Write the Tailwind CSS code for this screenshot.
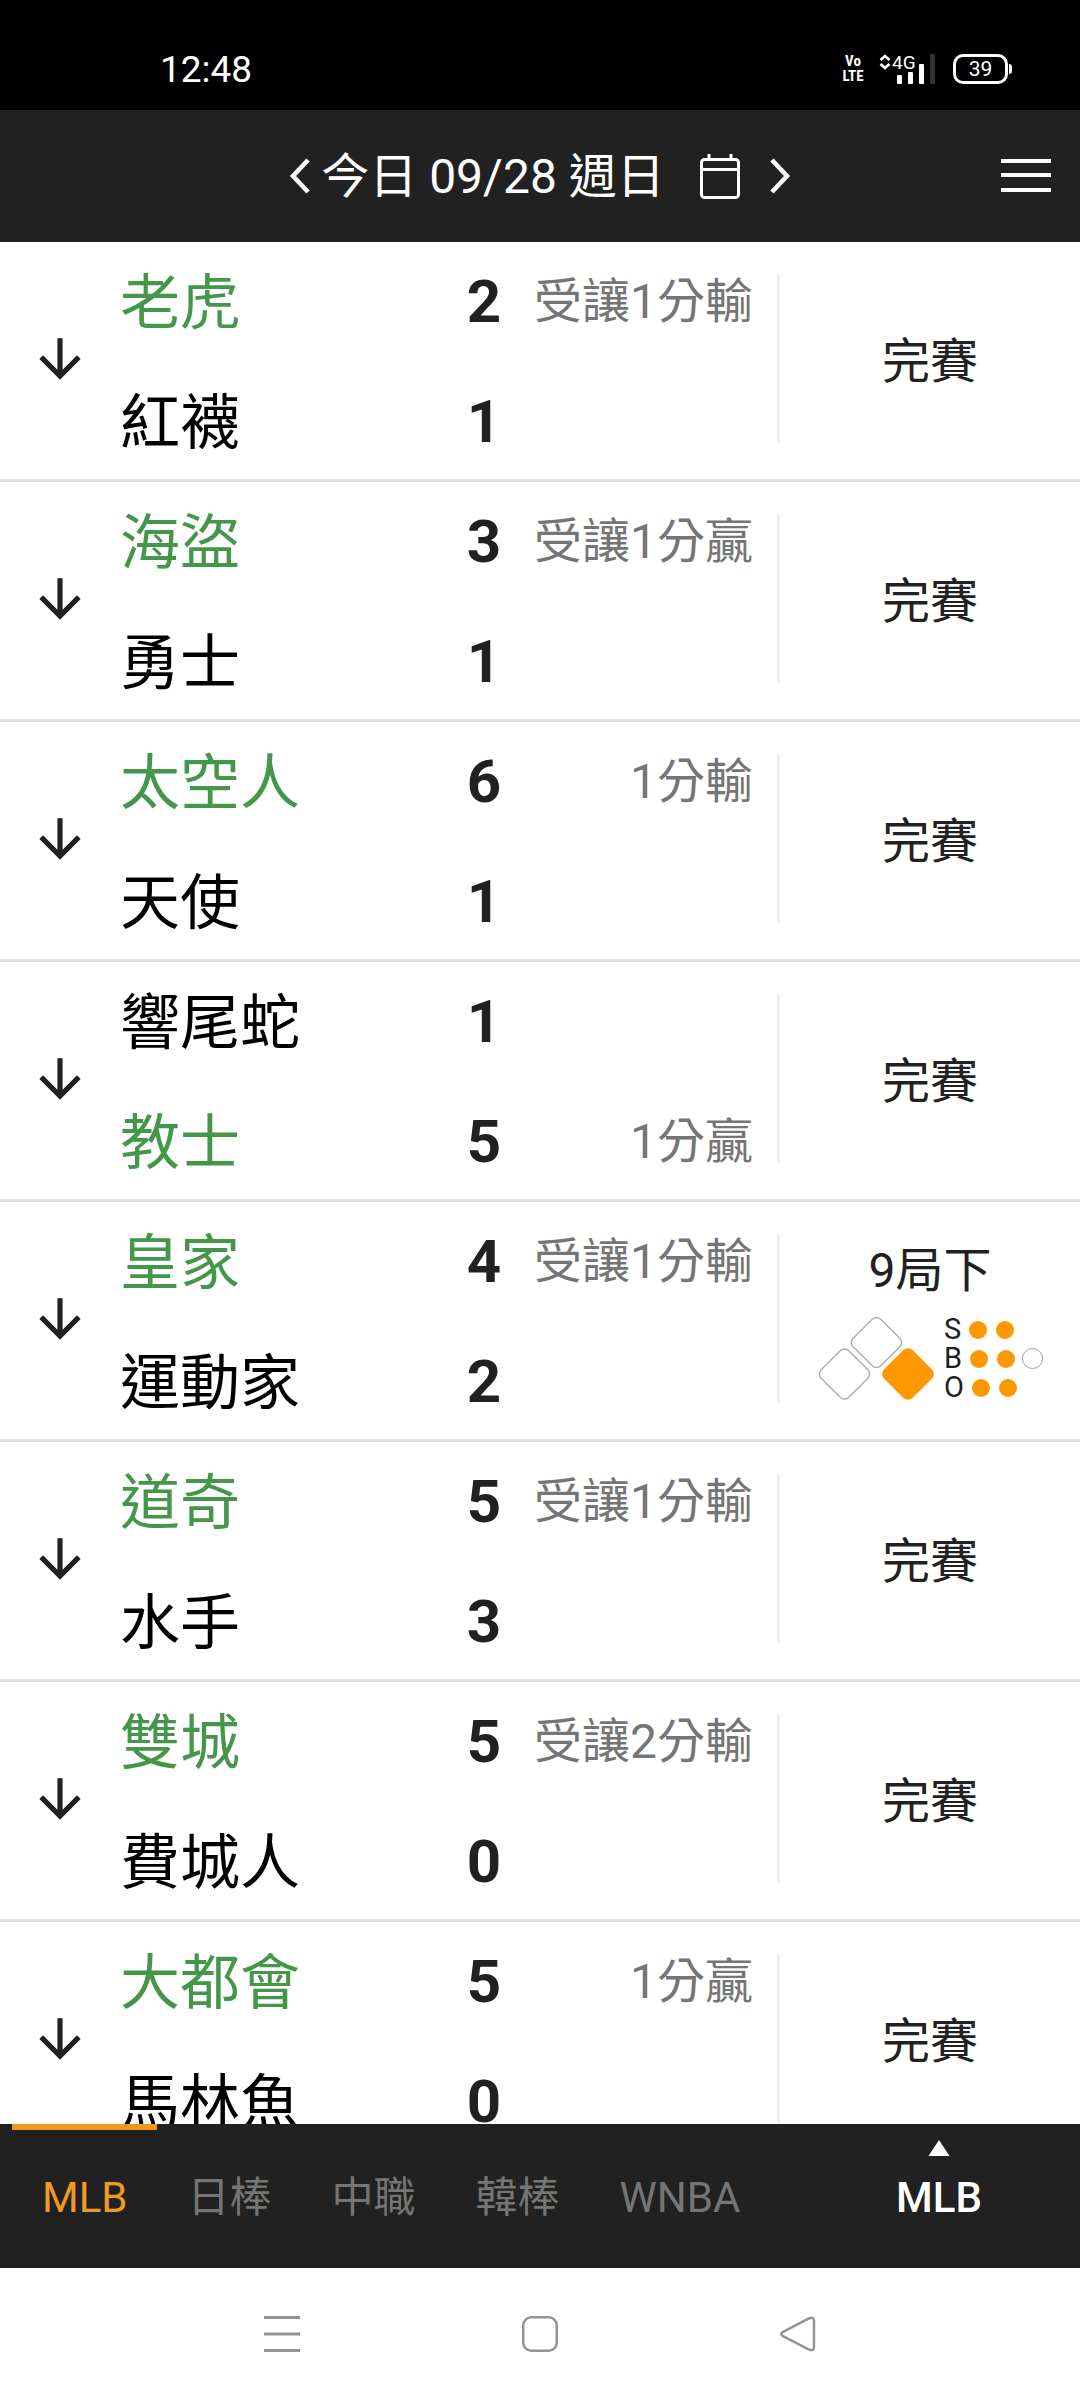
<!DOCTYPE html>
<html lang="zh-Hant">
<head>
<meta charset="utf-8">
<meta name="viewport" content="width=device-width, initial-scale=1">
<title>今日賽事</title>
<script src="https://cdn.jsdelivr.net/npm/@tailwindcss/browser@4"></script>
</head>
<body class="flex h-screen flex-col overflow-hidden bg-white font-[Roboto,'Noto_Sans_CJK_TC',sans-serif] text-[#212121]">

<svg class="hidden" aria-hidden="true">
  <symbol id="down" viewBox="0 0 24 24"><path fill="currentColor" d="M20 12l-1.41-1.41L13 16.17V4h-2v12.17l-5.58-5.59L4 12l8 8 8-8z"/></symbol>
</svg>

<!-- Status bar -->
<div class="flex h-[110px] shrink-0 items-center justify-between bg-black pt-7 pr-[68px] pl-40 text-white">
  <span class="pt-[2px] text-[37px] leading-[40px]">12:48</span>
  <div class="flex items-center">
    <div class="flex w-[26px] flex-col text-center font-['Liberation_Sans_Narrow','Roboto_Condensed',Roboto,sans-serif] text-[15px] leading-[15px] font-bold"><span>Vo</span><span>LTE</span></div>
    <svg class="ml-[13px] h-[30px] w-[58px] overflow-visible" viewBox="0 0 58 30" aria-label="4G">
      <path d="M1.500 6L6 2l4.500 4M1.500 10L6 14l4.500-4" fill="none" stroke="#fff" stroke-width="2.600"/>
      <text x="13" y="15" fill="#fff" font-size="19">4G</text>
      <rect x="18" y="21" width="5" height="9" rx="1" fill="#fff"/>
      <rect x="29" y="18" width="5" height="12" rx="1" fill="#fff"/>
      <rect x="40" y="10" width="5" height="20" rx="1" fill="#fff"/>
      <rect x="51" y="0" width="5" height="30" rx="1" fill="#333"/>
    </svg>
    <div class="ml-4 flex items-center gap-px">
      <div class="flex h-[30px] w-[55px] items-center justify-center rounded-[10px] border-[3px] border-white text-[21px] leading-[24px]">39</div>
      <div class="h-[10px] w-[3px] rounded-r-sm bg-white"></div>
    </div>
  </div>
</div>

<!-- Date header -->
<header class="relative flex h-[132px] shrink-0 items-center justify-center bg-[#212121] text-white">
  <button type="button" aria-label="前一天"><svg class="h-[36px] w-[22px]" viewBox="0 0 22 36"><path d="M19 2L4 18l15 16" fill="none" stroke="currentColor" stroke-width="4.500"/></svg></button>
  <h1 class="ml-2.5 pt-[2px] text-[48px] leading-[56px] font-normal">今日 09/28 週日</h1>
  <button type="button" class="ml-[34px]" aria-label="選擇日期"><svg class="h-[46px] w-[42px]" viewBox="0 0 42 46"><rect x="2.500" y="6.500" width="37" height="38" rx="3" fill="none" stroke="currentColor" stroke-width="3"/><path d="M3 16.500h36M10 1v6M32 1v6" fill="none" stroke="currentColor" stroke-width="3"/></svg></button>
  <button type="button" class="ml-7" aria-label="後一天"><svg class="h-[36px] w-[22px]" viewBox="0 0 22 36"><path d="M3 2l15 16L3 34" fill="none" stroke="currentColor" stroke-width="4.500"/></svg></button>
  <button type="button" class="absolute right-[29px]" aria-label="選單"><svg class="h-[34px] w-[50px]" viewBox="0 0 50 34"><path d="M0 2h50M0 16h50M0 31h50" stroke="currentColor" stroke-width="4"/></svg></button>
</header>

<!-- Games -->
<main class="min-h-0 flex-1 overflow-hidden">
<ul>
  <li class="flex h-[240px] border-b-[3px] border-[#e0e0e0]">
    <button type="button" class="flex w-[120px] items-center justify-center pb-[3px]" aria-label="展開"><svg class="size-[62px]"><use href="#down"/></svg></button>
    <div class="flex flex-1 flex-col gap-[3px] pr-6">
      <div class="flex h-[117px] items-center pt-[2px]"><span class="flex-1 pt-1 text-[60px] leading-[72px] text-[#43964a]">老虎</span><span class="w-[60px] text-center text-[60px] leading-[72px] font-bold">2</span><span class="w-[239px] text-right text-[48px] leading-[56px] text-[#757575]">受讓1分輸</span></div>
      <div class="flex h-[117px] items-center pt-[2px]"><span class="flex-1 pt-1 text-[60px] leading-[72px] text-black">紅襪</span><span class="w-[60px] text-center text-[60px] leading-[72px] font-bold">1</span><span class="w-[239px]"></span></div>
    </div>
    <div class="mt-8 mb-[37px] w-[3px] bg-[#eeeeee]"></div>
    <div class="flex w-[300px] items-center justify-center pt-[2px] text-[48px] leading-[56px]">完賽</div>
  </li>
  <li class="flex h-[240px] border-b-[3px] border-[#e0e0e0]">
    <button type="button" class="flex w-[120px] items-center justify-center pb-[3px]" aria-label="展開"><svg class="size-[62px]"><use href="#down"/></svg></button>
    <div class="flex flex-1 flex-col gap-[3px] pr-6">
      <div class="flex h-[117px] items-center pt-[2px]"><span class="flex-1 pt-1 text-[60px] leading-[72px] text-[#43964a]">海盜</span><span class="w-[60px] text-center text-[60px] leading-[72px] font-bold">3</span><span class="w-[239px] text-right text-[48px] leading-[56px] text-[#757575]">受讓1分贏</span></div>
      <div class="flex h-[117px] items-center pt-[2px]"><span class="flex-1 pt-1 text-[60px] leading-[72px] text-black">勇士</span><span class="w-[60px] text-center text-[60px] leading-[72px] font-bold">1</span><span class="w-[239px]"></span></div>
    </div>
    <div class="mt-8 mb-[37px] w-[3px] bg-[#eeeeee]"></div>
    <div class="flex w-[300px] items-center justify-center pt-[2px] text-[48px] leading-[56px]">完賽</div>
  </li>
  <li class="flex h-[240px] border-b-[3px] border-[#e0e0e0]">
    <button type="button" class="flex w-[120px] items-center justify-center pb-[3px]" aria-label="展開"><svg class="size-[62px]"><use href="#down"/></svg></button>
    <div class="flex flex-1 flex-col gap-[3px] pr-6">
      <div class="flex h-[117px] items-center pt-[2px]"><span class="flex-1 pt-1 text-[60px] leading-[72px] text-[#43964a]">太空人</span><span class="w-[60px] text-center text-[60px] leading-[72px] font-bold">6</span><span class="w-[239px] text-right text-[48px] leading-[56px] text-[#757575]">1分輸</span></div>
      <div class="flex h-[117px] items-center pt-[2px]"><span class="flex-1 pt-1 text-[60px] leading-[72px] text-black">天使</span><span class="w-[60px] text-center text-[60px] leading-[72px] font-bold">1</span><span class="w-[239px]"></span></div>
    </div>
    <div class="mt-8 mb-[37px] w-[3px] bg-[#eeeeee]"></div>
    <div class="flex w-[300px] items-center justify-center pt-[2px] text-[48px] leading-[56px]">完賽</div>
  </li>
  <li class="flex h-[240px] border-b-[3px] border-[#e0e0e0]">
    <button type="button" class="flex w-[120px] items-center justify-center pb-[3px]" aria-label="展開"><svg class="size-[62px]"><use href="#down"/></svg></button>
    <div class="flex flex-1 flex-col gap-[3px] pr-6">
      <div class="flex h-[117px] items-center pt-[2px]"><span class="flex-1 pt-1 text-[60px] leading-[72px] text-black">響尾蛇</span><span class="w-[60px] text-center text-[60px] leading-[72px] font-bold">1</span><span class="w-[239px]"></span></div>
      <div class="flex h-[117px] items-center pt-[2px]"><span class="flex-1 pt-1 text-[60px] leading-[72px] text-[#43964a]">教士</span><span class="w-[60px] text-center text-[60px] leading-[72px] font-bold">5</span><span class="w-[239px] text-right text-[48px] leading-[56px] text-[#757575]">1分贏</span></div>
    </div>
    <div class="mt-8 mb-[37px] w-[3px] bg-[#eeeeee]"></div>
    <div class="flex w-[300px] items-center justify-center pt-[2px] text-[48px] leading-[56px]">完賽</div>
  </li>
  <li class="flex h-[240px] border-b-[3px] border-[#e0e0e0]">
    <button type="button" class="flex w-[120px] items-center justify-center pb-[3px]" aria-label="展開"><svg class="size-[62px]"><use href="#down"/></svg></button>
    <div class="flex flex-1 flex-col gap-[3px] pr-6">
      <div class="flex h-[117px] items-center pt-[2px]"><span class="flex-1 pt-1 text-[60px] leading-[72px] text-[#43964a]">皇家</span><span class="w-[60px] text-center text-[60px] leading-[72px] font-bold">4</span><span class="w-[239px] text-right text-[48px] leading-[56px] text-[#757575]">受讓1分輸</span></div>
      <div class="flex h-[117px] items-center pt-[2px]"><span class="flex-1 pt-1 text-[60px] leading-[72px] text-black">運動家</span><span class="w-[60px] text-center text-[60px] leading-[72px] font-bold">2</span><span class="w-[239px]"></span></div>
    </div>
    <div class="mt-8 mb-[37px] w-[3px] bg-[#eeeeee]"></div>
    <!-- Live game: inning, bases, count -->
    <div class="flex w-[300px] flex-col items-center justify-center gap-4 pt-1">
      <span class="text-[48px] leading-[56px]">9局下</span>
      <div class="flex items-center gap-2 pl-1">
        <svg class="h-[86px] w-[118px]" viewBox="0 0 118 86" aria-label="一壘有人">
          <g stroke-width="1.500" stroke="#b0b0b0" fill="#fff">
            <rect x="39" y="7" width="39" height="39" rx="6" transform="rotate(45 58.500 26.500)"/>
            <rect x="7" y="38.500" width="39" height="39" rx="6" transform="rotate(45 26.500 58)"/>
            <rect x="70.500" y="38.500" width="39" height="39" rx="6" transform="rotate(45 90 58)" fill="#ff9800" stroke="#ff9800"/>
          </g>
        </svg>
        <div class="flex w-[102px] flex-col text-[29px] leading-[29px]">
          <div class="flex h-[29px] items-center"><span>S</span><i class="ml-2 size-[18px] rounded-full bg-[#ff9800]"></i><i class="ml-[9px] size-[18px] rounded-full bg-[#ff9800]"></i></div>
          <div class="flex h-[29px] items-center"><span>B</span><i class="ml-2 size-[18px] rounded-full bg-[#ff9800]"></i><i class="ml-[9px] size-[18px] rounded-full bg-[#ff9800]"></i><i class="ml-[7px] size-[21px] rounded-full border border-[#9e9e9e]"></i></div>
          <div class="flex h-[29px] items-center"><span>O</span><i class="ml-2 size-[18px] rounded-full bg-[#ff9800]"></i><i class="ml-[9px] size-[18px] rounded-full bg-[#ff9800]"></i></div>
        </div>
      </div>
    </div>
  </li>
  <li class="flex h-[240px] border-b-[3px] border-[#e0e0e0]">
    <button type="button" class="flex w-[120px] items-center justify-center pb-[3px]" aria-label="展開"><svg class="size-[62px]"><use href="#down"/></svg></button>
    <div class="flex flex-1 flex-col gap-[3px] pr-6">
      <div class="flex h-[117px] items-center pt-[2px]"><span class="flex-1 pt-1 text-[60px] leading-[72px] text-[#43964a]">道奇</span><span class="w-[60px] text-center text-[60px] leading-[72px] font-bold">5</span><span class="w-[239px] text-right text-[48px] leading-[56px] text-[#757575]">受讓1分輸</span></div>
      <div class="flex h-[117px] items-center pt-[2px]"><span class="flex-1 pt-1 text-[60px] leading-[72px] text-black">水手</span><span class="w-[60px] text-center text-[60px] leading-[72px] font-bold">3</span><span class="w-[239px]"></span></div>
    </div>
    <div class="mt-8 mb-[37px] w-[3px] bg-[#eeeeee]"></div>
    <div class="flex w-[300px] items-center justify-center pt-[2px] text-[48px] leading-[56px]">完賽</div>
  </li>
  <li class="flex h-[240px] border-b-[3px] border-[#e0e0e0]">
    <button type="button" class="flex w-[120px] items-center justify-center pb-[3px]" aria-label="展開"><svg class="size-[62px]"><use href="#down"/></svg></button>
    <div class="flex flex-1 flex-col gap-[3px] pr-6">
      <div class="flex h-[117px] items-center pt-[2px]"><span class="flex-1 pt-1 text-[60px] leading-[72px] text-[#43964a]">雙城</span><span class="w-[60px] text-center text-[60px] leading-[72px] font-bold">5</span><span class="w-[239px] text-right text-[48px] leading-[56px] text-[#757575]">受讓2分輸</span></div>
      <div class="flex h-[117px] items-center pt-[2px]"><span class="flex-1 pt-1 text-[60px] leading-[72px] text-black">費城人</span><span class="w-[60px] text-center text-[60px] leading-[72px] font-bold">0</span><span class="w-[239px]"></span></div>
    </div>
    <div class="mt-8 mb-[37px] w-[3px] bg-[#eeeeee]"></div>
    <div class="flex w-[300px] items-center justify-center pt-[2px] text-[48px] leading-[56px]">完賽</div>
  </li>
  <li class="flex h-[240px] border-b-[3px] border-[#e0e0e0]">
    <button type="button" class="flex w-[120px] items-center justify-center pb-[3px]" aria-label="展開"><svg class="size-[62px]"><use href="#down"/></svg></button>
    <div class="flex flex-1 flex-col gap-[3px] pr-6">
      <div class="flex h-[117px] items-center pt-[2px]"><span class="flex-1 pt-1 text-[60px] leading-[72px] text-[#43964a]">大都會</span><span class="w-[60px] text-center text-[60px] leading-[72px] font-bold">5</span><span class="w-[239px] text-right text-[48px] leading-[56px] text-[#757575]">1分贏</span></div>
      <div class="flex h-[117px] items-center pt-[2px]"><span class="flex-1 pt-1 text-[60px] leading-[72px] text-black">馬林魚</span><span class="w-[60px] text-center text-[60px] leading-[72px] font-bold">0</span><span class="w-[239px]"></span></div>
    </div>
    <div class="mt-8 mb-[37px] w-[3px] bg-[#eeeeee]"></div>
    <div class="flex w-[300px] items-center justify-center pt-[2px] text-[48px] leading-[56px]">完賽</div>
  </li>
</ul>
</main>

<!-- League tabs -->
<nav class="flex h-[144px] shrink-0 bg-[#212121] pl-3 text-[42px] leading-[48px] text-[#757575]">
  <a href="#mlb" class="flex items-center border-t-[6px] border-[#f0981b] px-[30px] pb-[2px] text-[#f09a22]">MLB</a>
  <a href="#npb" class="flex items-center px-[30px] pt-1">日棒</a>
  <a href="#cpbl" class="flex items-center px-[30px] pt-1">中職</a>
  <a href="#kbo" class="flex items-center px-[30px] pt-1">韓棒</a>
  <a href="#wnba" class="flex items-center px-[30px] pt-1">WNBA</a>
  <button type="button" class="ml-auto flex w-[282px] flex-col items-center gap-[18px] pt-4 font-medium text-white">
    <svg class="h-4 w-[22px]" viewBox="0 0 22 16"><path d="M11 0l10.500 16H.5z" fill="currentColor"/></svg>
    <span>MLB</span>
  </button>
</nav>

<!-- System navigation -->
<div class="mx-auto grid h-[132px] w-full max-w-[774px] shrink-0 grid-cols-3 items-center text-[#949494]">
  <button type="button" class="flex justify-center" aria-label="最近使用"><svg class="size-[36px]" viewBox="0 0 36 36"><path d="M0 1.500h36M0 18h36M0 34.500h36" stroke="currentColor" stroke-width="3"/></svg></button>
  <button type="button" class="flex justify-center" aria-label="主畫面"><svg class="size-[36px]" viewBox="0 0 36 36"><rect x="1.250" y="1.250" width="33.500" height="33.500" rx="8" fill="none" stroke="currentColor" stroke-width="2.500"/></svg></button>
  <button type="button" class="flex justify-center" aria-label="返回"><svg class="size-[36px]" viewBox="0 0 36 36"><path d="M29.500 2.200L3 15.800q-3.500 2.200 0 4.400l26.500 13.600q4.500 1.500 4.500-2.500V4.700q0-4-4.500-2.500z" fill="none" stroke="currentColor" stroke-width="2.500"/></svg></button>
</div>
</body>
</html>
